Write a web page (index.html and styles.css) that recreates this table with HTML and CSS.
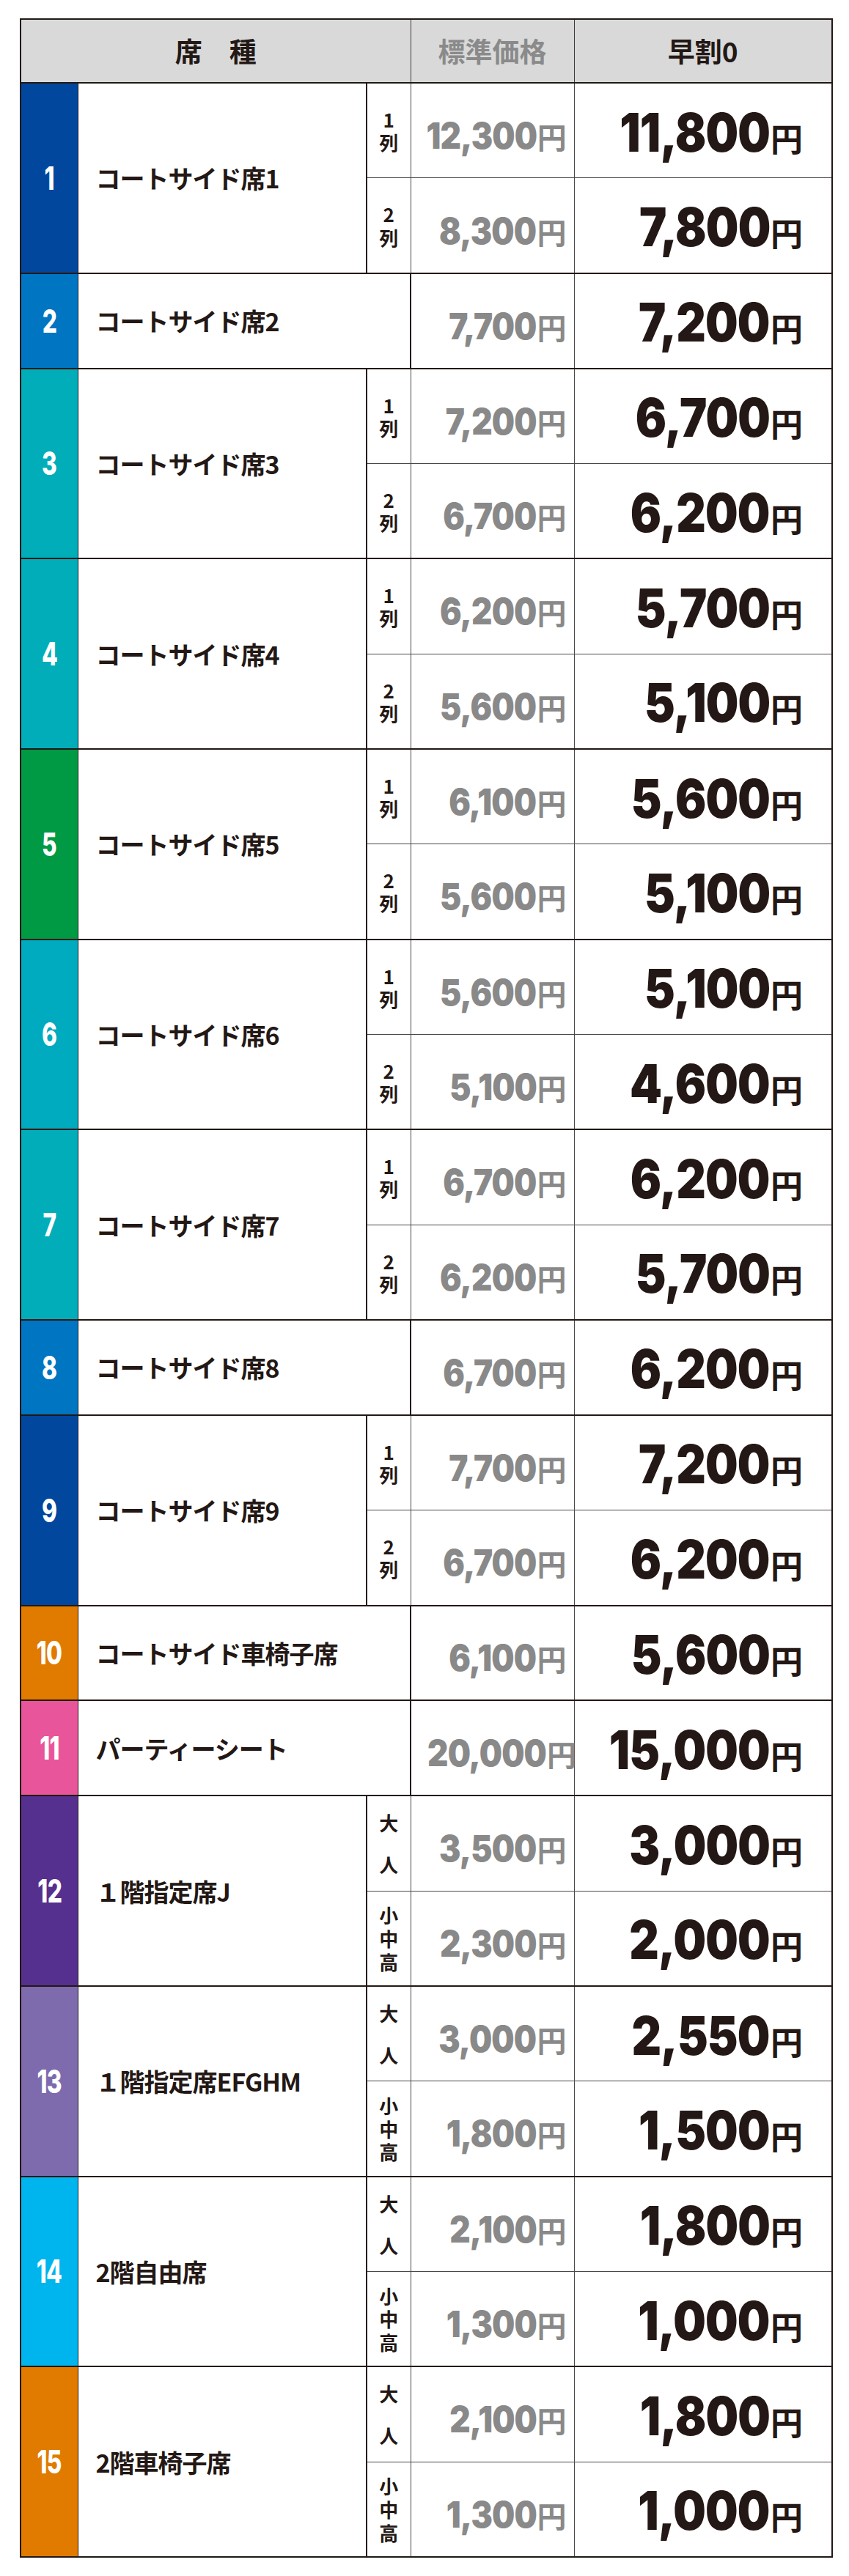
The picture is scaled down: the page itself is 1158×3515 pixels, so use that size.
FILE: index.html
```html
<!DOCTYPE html>
<html lang="ja">
<head>
<meta charset="utf-8">
<title>席種・価格表</title>
<link rel="stylesheet" href="styles.css">
</head>
<body>
<table class="price-table">
  <colgroup>
    <col class="c-num"><col class="c-name"><col class="c-sub"><col class="c-std"><col class="c-early">
  </colgroup>
  <thead>
    <tr class="head">
      <th colspan="3" class="h-seat">席　種</th>
      <th class="h-std">標準価格</th>
      <th class="h-early">早割0</th>
    </tr>
  </thead>
  <tbody>
    <tr class="first">
      <td rowspan="2" class="num navy"><span class="n">1</span></td>
      <td rowspan="2" class="name">コートサイド席1</td>
      <td class="sub">1<br>列</td>
      <td class="std"><span class="d">12,300</span><span class="yen">円</span></td>
      <td class="early"><span class="d">11,800</span><span class="yen">円</span></td>
    </tr>
    <tr>
      <td class="sub">2<br>列</td>
      <td class="std"><span class="d">8,300</span><span class="yen">円</span></td>
      <td class="early"><span class="d">7,800</span><span class="yen">円</span></td>
    </tr>

    <tr class="first">
      <td class="num blue"><span class="n">2</span></td>
      <td colspan="2" class="name">コートサイド席2</td>
      <td class="std"><span class="d">7,700</span><span class="yen">円</span></td>
      <td class="early"><span class="d">7,200</span><span class="yen">円</span></td>
    </tr>

    <tr class="first">
      <td rowspan="2" class="num teal"><span class="n">3</span></td>
      <td rowspan="2" class="name">コートサイド席3</td>
      <td class="sub">1<br>列</td>
      <td class="std"><span class="d">7,200</span><span class="yen">円</span></td>
      <td class="early"><span class="d">6,700</span><span class="yen">円</span></td>
    </tr>
    <tr>
      <td class="sub">2<br>列</td>
      <td class="std"><span class="d">6,700</span><span class="yen">円</span></td>
      <td class="early"><span class="d">6,200</span><span class="yen">円</span></td>
    </tr>

    <tr class="first">
      <td rowspan="2" class="num teal"><span class="n">4</span></td>
      <td rowspan="2" class="name">コートサイド席4</td>
      <td class="sub">1<br>列</td>
      <td class="std"><span class="d">6,200</span><span class="yen">円</span></td>
      <td class="early"><span class="d">5,700</span><span class="yen">円</span></td>
    </tr>
    <tr>
      <td class="sub">2<br>列</td>
      <td class="std"><span class="d">5,600</span><span class="yen">円</span></td>
      <td class="early"><span class="d">5,100</span><span class="yen">円</span></td>
    </tr>

    <tr class="first">
      <td rowspan="2" class="num green"><span class="n">5</span></td>
      <td rowspan="2" class="name">コートサイド席5</td>
      <td class="sub">1<br>列</td>
      <td class="std"><span class="d">6,100</span><span class="yen">円</span></td>
      <td class="early"><span class="d">5,600</span><span class="yen">円</span></td>
    </tr>
    <tr>
      <td class="sub">2<br>列</td>
      <td class="std"><span class="d">5,600</span><span class="yen">円</span></td>
      <td class="early"><span class="d">5,100</span><span class="yen">円</span></td>
    </tr>

    <tr class="first">
      <td rowspan="2" class="num cyan"><span class="n">6</span></td>
      <td rowspan="2" class="name">コートサイド席6</td>
      <td class="sub">1<br>列</td>
      <td class="std"><span class="d">5,600</span><span class="yen">円</span></td>
      <td class="early"><span class="d">5,100</span><span class="yen">円</span></td>
    </tr>
    <tr>
      <td class="sub">2<br>列</td>
      <td class="std"><span class="d">5,100</span><span class="yen">円</span></td>
      <td class="early"><span class="d">4,600</span><span class="yen">円</span></td>
    </tr>

    <tr class="first">
      <td rowspan="2" class="num teal"><span class="n">7</span></td>
      <td rowspan="2" class="name">コートサイド席7</td>
      <td class="sub">1<br>列</td>
      <td class="std"><span class="d">6,700</span><span class="yen">円</span></td>
      <td class="early"><span class="d">6,200</span><span class="yen">円</span></td>
    </tr>
    <tr>
      <td class="sub">2<br>列</td>
      <td class="std"><span class="d">6,200</span><span class="yen">円</span></td>
      <td class="early"><span class="d">5,700</span><span class="yen">円</span></td>
    </tr>

    <tr class="first">
      <td class="num blue"><span class="n">8</span></td>
      <td colspan="2" class="name">コートサイド席8</td>
      <td class="std"><span class="d">6,700</span><span class="yen">円</span></td>
      <td class="early"><span class="d">6,200</span><span class="yen">円</span></td>
    </tr>

    <tr class="first">
      <td rowspan="2" class="num navy"><span class="n">9</span></td>
      <td rowspan="2" class="name">コートサイド席9</td>
      <td class="sub">1<br>列</td>
      <td class="std"><span class="d">7,700</span><span class="yen">円</span></td>
      <td class="early"><span class="d">7,200</span><span class="yen">円</span></td>
    </tr>
    <tr>
      <td class="sub">2<br>列</td>
      <td class="std"><span class="d">6,700</span><span class="yen">円</span></td>
      <td class="early"><span class="d">6,200</span><span class="yen">円</span></td>
    </tr>

    <tr class="first">
      <td class="num orange"><span class="n">10</span></td>
      <td colspan="2" class="name">コートサイド車椅子席</td>
      <td class="std"><span class="d">6,100</span><span class="yen">円</span></td>
      <td class="early"><span class="d">5,600</span><span class="yen">円</span></td>
    </tr>

    <tr class="first">
      <td class="num pink"><span class="n">11</span></td>
      <td colspan="2" class="name">パーティーシート</td>
      <td class="std"><span class="d">20,000</span><span class="yen">円</span></td>
      <td class="early"><span class="d">15,000</span><span class="yen">円</span></td>
    </tr>

    <tr class="first">
      <td rowspan="2" class="num purple"><span class="n">12</span></td>
      <td rowspan="2" class="name">１階指定席J</td>
      <td class="sub adult">大<br>人</td>
      <td class="std"><span class="d">3,500</span><span class="yen">円</span></td>
      <td class="early"><span class="d">3,000</span><span class="yen">円</span></td>
    </tr>
    <tr>
      <td class="sub child">小<br>中<br>高</td>
      <td class="std"><span class="d">2,300</span><span class="yen">円</span></td>
      <td class="early"><span class="d">2,000</span><span class="yen">円</span></td>
    </tr>

    <tr class="first">
      <td rowspan="2" class="num lavender"><span class="n">13</span></td>
      <td rowspan="2" class="name">１階指定席EFGHM</td>
      <td class="sub adult">大<br>人</td>
      <td class="std"><span class="d">3,000</span><span class="yen">円</span></td>
      <td class="early"><span class="d">2,550</span><span class="yen">円</span></td>
    </tr>
    <tr>
      <td class="sub child">小<br>中<br>高</td>
      <td class="std"><span class="d">1,800</span><span class="yen">円</span></td>
      <td class="early"><span class="d">1,500</span><span class="yen">円</span></td>
    </tr>

    <tr class="first">
      <td rowspan="2" class="num sky"><span class="n">14</span></td>
      <td rowspan="2" class="name">2階自由席</td>
      <td class="sub adult">大<br>人</td>
      <td class="std"><span class="d">2,100</span><span class="yen">円</span></td>
      <td class="early"><span class="d">1,800</span><span class="yen">円</span></td>
    </tr>
    <tr>
      <td class="sub child">小<br>中<br>高</td>
      <td class="std"><span class="d">1,300</span><span class="yen">円</span></td>
      <td class="early"><span class="d">1,000</span><span class="yen">円</span></td>
    </tr>

    <tr class="first">
      <td rowspan="2" class="num orange"><span class="n">15</span></td>
      <td rowspan="2" class="name">2階車椅子席</td>
      <td class="sub adult">大<br>人</td>
      <td class="std"><span class="d">2,100</span><span class="yen">円</span></td>
      <td class="early"><span class="d">1,800</span><span class="yen">円</span></td>
    </tr>
    <tr>
      <td class="sub child">小<br>中<br>高</td>
      <td class="std"><span class="d">1,300</span><span class="yen">円</span></td>
      <td class="early"><span class="d">1,000</span><span class="yen">円</span></td>
    </tr>
  </tbody>
</table>
</body>
</html>
```

FILE: styles.css
```css
html, body {
  margin: 0;
  padding: 0;
  background: #ffffff;
}

body {
  padding: 25px 0 0 27px;
  font-family: "Noto Sans CJK JP", "Noto Sans", sans-serif;
  color: #231815;
}

.price-table {
  border-collapse: collapse;
  table-layout: fixed;
  width: 1107px;
  border: 2px solid #231815;
}

.c-num { width: 78px; }
.c-name { width: 394px; }
.c-sub { width: 60px; }
.c-std { width: 223px; }
.c-early { width: 352px; }

.head {
  height: 87px;
}

.head th {
  padding: 0;
  background: #d9d9d9;
  border: 1.5px solid #3e3a39;
  border-bottom: 2.5px solid #231815;
  font-size: 37px;
  font-weight: 700;
  line-height: 1;
  text-align: center;
  vertical-align: middle;
}

.h-seat { color: #231815; }
.h-std { color: #8a8a8a; }
.h-early { color: #231815; }

tbody tr {
  height: 129.85px;
}

td {
  padding: 0;
  border: 1.5px solid #4a4746;
  vertical-align: middle;
}

tr.first td {
  border-top: 2.5px solid #231815;
}

.num {
  color: #ffffff;
  text-align: center;
  border-right: 1.5px solid #231815;
}

.n {
  display: inline-block;
  font-family: Inter, "Liberation Sans", sans-serif;
  font-weight: 800;
  font-size: 44px;
  letter-spacing: -1px;
  transform: scaleX(0.72);
}

.navy { background: #00479d; }
.blue { background: #0075c2; }
.teal { background: #00adb9; }
.cyan { background: #00aabf; }
.green { background: #009944; }
.orange { background: #e17b00; }
.pink { background: #e8559a; }
.purple { background: #55308e; }
.lavender { background: #7d6bae; }
.sky { background: #00b4ed; }

.name {
  padding-left: 24px;
  font-size: 34px;
  font-weight: 700;
  letter-spacing: -1px;
  white-space: nowrap;
  border-right: 2px solid #231815;
}

.sub {
  text-align: center;
  font-size: 26px;
  font-weight: 700;
  line-height: 1.2;
}

.sub.adult { line-height: 2.2; }
.sub.child { line-height: 1.22; }

.std, .early {
  text-align: right;
  white-space: nowrap;
}

.d {
  display: inline-block;
  font-family: Inter, "Liberation Sans", sans-serif;
  font-weight: 900;
  letter-spacing: -1px;
  transform-origin: right center;
}

.std {
  color: #898989;
  padding-right: 10px;
  padding-top: 14px;
}

.std .d {
  font-size: 50px;
  transform: scaleX(0.88);
}

.early {
  color: #231815;
  padding-right: 39px;
  padding-top: 4px;
}

.early .d {
  font-size: 73px;
  transform: scaleX(0.86);
}

.yen {
  font-family: "Noto Sans CJK JP", sans-serif;
  font-weight: 700;
  margin-left: 1px;
}

.std .yen { font-size: 40px; }
.early .yen { font-size: 44px; }
```
